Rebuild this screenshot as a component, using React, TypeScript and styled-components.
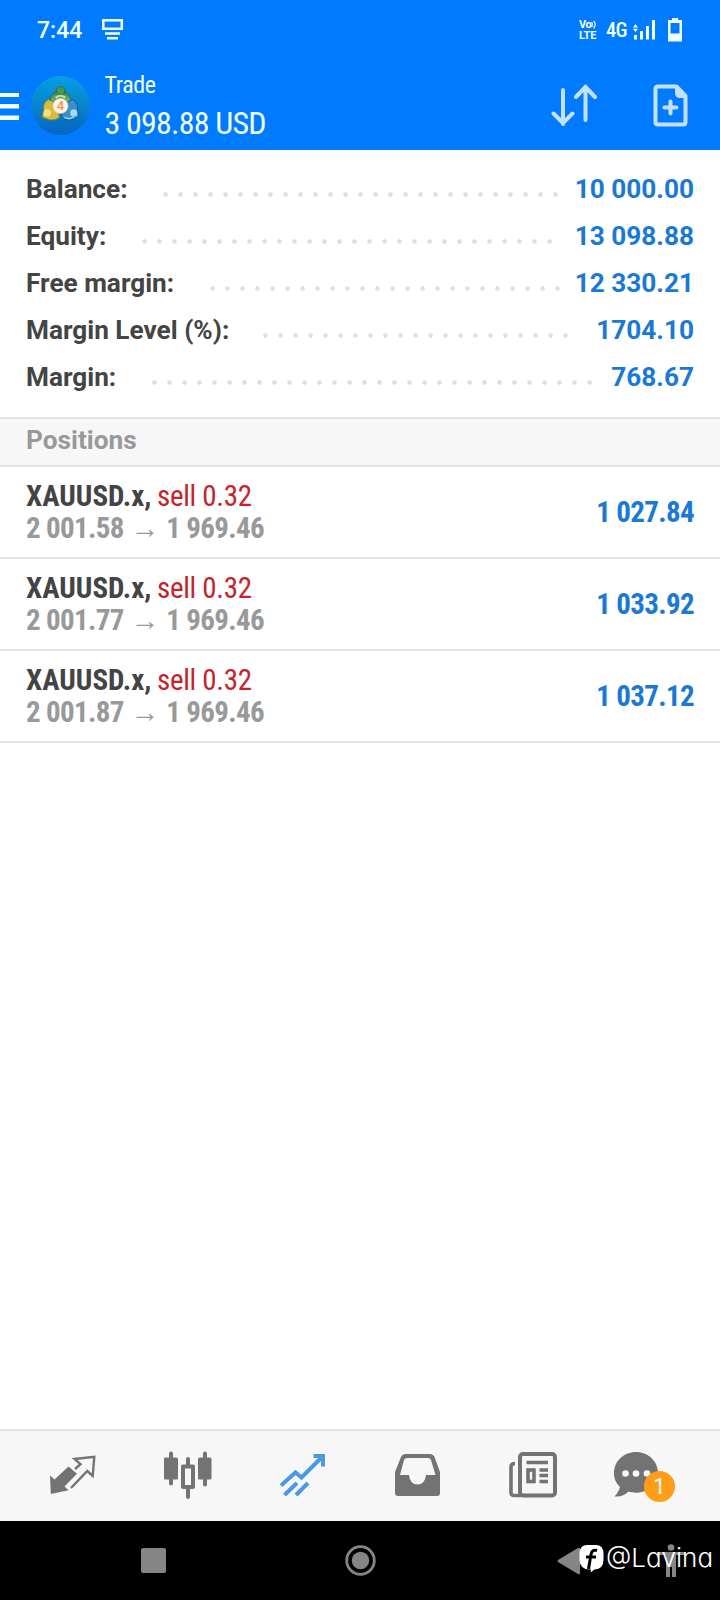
import React from "react";
import styled, { createGlobalStyle } from "styled-components";

const Global = createGlobalStyle`
  *, *::before, *::after { box-sizing: border-box; }
  body { margin: 0; background: #fff; font-family: Roboto, "Liberation Sans", sans-serif; }
  svg { display: block; flex: none; }
`;

const Screen = styled.div`
  width: 720px;
  height: 1600px;
  display: flex;
  flex-direction: column;
  background: #fff;
  overflow: hidden;
`;

const Header = styled.header`
  height: 150px;
  flex: none;
  background: #007aff;
  color: #f0ffff;
`;

const StatusBar = styled.div`
  height: 60px;
  display: flex;
  align-items: center;
  padding: 0 38px 0 37px;
`;

const Clock = styled.span`
  font-size: 23px;
  font-weight: 500;
  line-height: 30px;
  width: 65px;
  margin-top: 2px;
`;

const StatusIcons = styled.div`
  margin-left: auto;
  display: flex;
  align-items: center;
`;

const Volte = styled.div`
  display: flex;
  flex-direction: column;
  width: 20px;
  margin-right: 7px;
  font-size: 11px;
  font-weight: 700;
  line-height: 11px;
  letter-spacing: -0.5px;
`;

const VolteTop = styled.span`
  display: flex;
  height: 11px;
`;

const VolteBottom = styled.span`
  letter-spacing: -0.2px;
`;

const Network = styled.span`
  font-size: 20.5px;
  font-stretch: 80%;
  font-weight: 500;
  letter-spacing: -0.8px;
  width: 27px;
`;

const Toolbar = styled.div`
  height: 90px;
  display: flex;
  align-items: center;
`;

const Titles = styled.div`
  margin-left: 15px;
  flex: 1;
  display: flex;
  flex-direction: column;
  font-stretch: 75%;
`;

const Title = styled.span`
  font-size: 24px;
  line-height: 32px;
  margin-top: 3px;
  letter-spacing: -0.4px;
`;

const Profit = styled.span`
  font-size: 32px;
  line-height: 44px;
  letter-spacing: -0.8px;
`;

const ToolbarActions = styled.div`
  display: flex;
  align-items: center;
  gap: 56px;
  padding-right: 32px;
`;

const Summary = styled.section`
  height: 267px;
  flex: none;
  padding: 15px 26px 0;
`;

const SummaryRow = styled.div`
  height: 47px;
  display: flex;
  align-items: center;
  font-size: 26.2px;
  font-weight: 670;
  line-height: 46px;
  color: #444;
`;

const Label = styled.span<{ $width: number }>`
  width: ${(p) => p.$width}px;
  white-space: nowrap;
`;

const Leader = styled.span<{ $dots: number }>`
  width: ${(p) => p.$dots * 15}px;
  height: 5px;
  margin-top: 11px;
  background: radial-gradient(circle at 7.5px 2.5px, #e0e0e0 1.9px, transparent 2.7px) 0 0 / 15px 5px repeat-x;
`;

const Amount = styled.span`
  margin-left: auto;
  color: #1a78d6;
  white-space: nowrap;
`;

const SectionTitle = styled.h2`
  margin: 0;
  height: 50px;
  flex: none;
  border-top: 2px solid #e2e2e2;
  border-bottom: 2px solid #e2e2e2;
  background: #f7f7f7;
  padding: 0 26px;
  font-size: 26.2px;
  font-weight: 670;
  line-height: 42px;
  color: #97999b;
`;

const PositionRow = styled.div`
  height: 92px;
  flex: none;
  border-bottom: 2px solid #e2e2e2;
  padding: 0 26px;
  display: flex;
  align-items: center;
  justify-content: space-between;
  font-size: 29px;
  font-weight: 700;
  font-stretch: 75%;
  line-height: 32px;
`;

const Symbol = styled.div`
  color: #444;
  white-space: nowrap;
`;

const Side = styled.span`
  font-weight: 400;
  color: #c4242b;
  letter-spacing: -0.3px;
  margin-left: -1px;
`;

const Prices = styled.div`
  color: #97999b;
  white-space: nowrap;
`;

const Price = styled.span`
  letter-spacing: -0.65px;
`;

const Result = styled.span`
  color: #1a78d6;
  letter-spacing: -0.65px;
`;

const Spacer = styled.div`
  flex: 1;
`;

const TabBar = styled.nav`
  height: 92px;
  flex: none;
  border-top: 2px solid #e2e2e2;
  background: #f7f7f7;
  display: flex;
  padding-left: 15px;
`;

const Tab = styled.div<{ $active?: boolean; $badged?: boolean }>`
  position: relative;
  width: 115px;
  display: flex;
  align-items: center;
  justify-content: center;
  padding-bottom: 3px;
  padding-right: ${(p) => (p.$badged ? 22 : 0)}px;
  color: ${(p) => (p.$active ? "#4a98e6" : "#737373")};
`;

const Badge = styled.span`
  position: absolute;
  left: 54px;
  top: 40px;
  width: 31px;
  height: 31px;
  border-radius: 50%;
  background: #ff9d17;
  color: #fff;
  font-size: 22px;
  line-height: 32px;
  text-align: center;
`;

const SystemBar = styled.footer`
  height: 79px;
  flex: none;
  position: relative;
  background: #000;
  display: flex;
  align-items: center;
  padding-left: 141px;
`;

const RecentButton = styled.span`
  width: 25px;
  height: 25px;
  border-radius: 2px;
  background: #858585;
  margin-right: 179px;
`;

const Watermark = styled.div`
  position: absolute;
  left: 579px;
  top: 21px;
  display: flex;
  align-items: center;
  color: #fff;
  font-family: Inter, sans-serif;
  font-size: 26px;
  font-weight: 350;
  line-height: 32px;
  font-feature-settings: "cv11";
`;

const Handle = styled.span`
  margin-left: 2px;
`;

const summary = [
  { label: "Balance:", width: 132, dots: 27, value: "10 000.00" },
  { label: "Equity:", width: 111, dots: 28, value: "13 098.88" },
  { label: "Free margin:", width: 179, dots: 24, value: "12 330.21" },
  { label: "Margin Level (%):", width: 232, dots: 21, value: "1704.10" },
  { label: "Margin:", width: 121, dots: 30, value: "768.67" },
];

const positions = [
  { open: "2 001.58", profit: "1 027.84" },
  { open: "2 001.77", profit: "1 033.92" },
  { open: "2 001.87", profit: "1 037.12" },
];

const CastIcon = () => (
  <svg width="22" height="22" viewBox="0 0 22 22" fill="none" stroke="currentColor">
    <rect x="1.3" y="1.3" width="18.500" height="8.5" strokeWidth="2.5" />
    <path d="M3 14.5h15M5 19.3h11" strokeWidth="2.6" />
  </svg>
);

const VolteWaves = () => (
  <svg width="6" height="10" viewBox="0 0 6 10" fill="none" stroke="currentColor" strokeWidth="1.2">
    <path d="M.5 3.200q1.8 2.3 0 5M2.6 1.800q3.2 3.500 0 7.500" />
  </svg>
);

const SignalIcon = () => (
  <svg width="23" height="20" viewBox="0 0 23 20" fill="currentColor">
    <path d="M2.5 4L5 7.5H0zM2.5 12L5 8.8H0zM1 15h3v4.5H1zM7 11h3v8.5H7zM13 6h3v13.500h-3zM19 0h3v19.500h-3z" />
  </svg>
);

const BatteryIcon = () => (
  <svg width="14" height="24" viewBox="0 0 14 24" fill="currentColor">
    <path fillRule="evenodd" d="M4 0h6v2h4v21.500H0V2h4zM2.500 5v10.500h9V5z" />
  </svg>
);

const MenuIcon = () => (
  <svg width="19" height="28" viewBox="0 0 19 28" fill="currentColor" style={{ marginTop: 3 }}>
    <path d="M0 0h19v4H0zM0 11h19v4.500H0zM0 22.500h19V27H0z" />
  </svg>
);

const Logo = () => (
  <svg width="59" height="61" viewBox="0 0 60 62" style={{ marginLeft: 11.5 }}>
    <defs>
      <linearGradient id="disc" x1="0" y1="0" x2="0" y2="1">
        <stop offset="0" stopColor="#069fe4" />
        <stop offset="0.5" stopColor="#0784cd" />
        <stop offset="1" stopColor="#0664c4" />
      </linearGradient>
      <linearGradient id="green" x1="0" y1="0" x2="0" y2="1">
        <stop offset="0" stopColor="#347f4c" />
        <stop offset="1" stopColor="#a3cd85" />
      </linearGradient>
    </defs>
    <circle cx="30" cy="31" r="30" fill="url(#disc)" />
    <path d="M25 17c-4 2-6 6-5 12l10 3 10-3c1-6-1-10-5-12z" fill="url(#green)" stroke="#2a6c50" />
    <path d="M18 25c-5 2-6 7-5 11l-1.500 5q-.5 3 3.500 3c4 3 11 2 14-1L26 29z" fill="#d9bb43" stroke="#6d8138" />
    <path d="M42 25c5 2 6 7 5 11l1.500 5q.5 3-3.500 3c-4 3-11 2-14-1L34 29z" fill="#3b8fc6" stroke="#155a94" />
    <circle cx="30" cy="16" r="4.300" fill="#4a9550" stroke="#26683e" strokeWidth=".8" />
    <path d="M25 23q5-4 10 0" fill="none" stroke="#c4e0a4" strokeWidth="2" />
    <circle cx="16.500" cy="38.500" r="3.800" fill="#f4e080" />
    <circle cx="43.500" cy="38.500" r="3.600" fill="#a6daf5" />
    <path d="M34 43q6 3 10-1" fill="none" stroke="#9bd6f5" strokeWidth="1.500" />
    <circle cx="30" cy="31.500" r="7.600" fill="#fff6e8" stroke="#d7d5c8" strokeWidth=".7" />
    <text x="30" y="36" textAnchor="middle" fontFamily="Roboto" fontWeight="500" fontSize="13" fill="#f09050">4</text>
  </svg>
);

const SortIcon = () => (
  <svg width="46" height="42" viewBox="0 0 46 42" fill="none" stroke="#c3e1ff" strokeWidth="4" strokeLinecap="round" strokeLinejoin="round">
    <path d="M12 6v34M2.500 29.500L12 39l9.500-9.500M34.500 36V2.500M25 13l9.500-10L44 13" />
  </svg>
);

const NewOrderIcon = () => (
  <svg width="35" height="43" viewBox="0 0 35 43" fill="none" stroke="#c3e1ff" strokeWidth="4" strokeLinejoin="round" strokeLinecap="round">
    <path d="M5 2.500h18.500L32.500 12v26q0 2.500-2.500 2.500H5q-2.500 0-2.500-2.500V5q0-2.500 2.500-2.500z" />
    <path d="M22 2v7q0 5 5 5h6L23 2z" fill="#c3e1ff" stroke="none" />
    <path d="M11.500 23.500h12M17.500 17.500v12" />
  </svg>
);

const QuotesIcon = () => (
  <svg width="46" height="40" viewBox="0 0 46 40" fill="currentColor">
    <path d="M18.500 11.500l8.500 7.300L14.500 31.500l4 3.800L.8 39 0 20.500l4.500 4z" />
    <path d="M25 14l5.500-4.800L24.500 4 44.300 1.800 42.700 21l-5.400-5L21 33" fill="none" stroke="currentColor" strokeWidth="2.400" />
  </svg>
);

const ChartIcon = () => (
  <svg width="48" height="48" viewBox="0 0 48 48" fill="currentColor">
    <rect x="0" y="6.500" width="14" height="22" rx="1.500" />
    <rect x="34" y="6.500" width="13.500" height="22" rx="1.500" />
    <path d="M7 2.500v30M41 2.500v31M24 8v38" stroke="currentColor" strokeWidth="4" strokeLinecap="round" />
    <rect x="19" y="15.500" width="10" height="20.500" fill="#f7f7f7" stroke="currentColor" strokeWidth="4" strokeLinejoin="round" />
  </svg>
);

const TradeIcon = () => (
  <svg width="46" height="44" viewBox="0 0 46 44" fill="none" stroke="currentColor" strokeWidth="4">
    <path d="M1 32.500L15.500 19.500l6 5L42 4M33.500 3H43v10.500M4.500 42l12.500-12M16 42l12-12" />
  </svg>
);

const InboxIcon = () => (
  <svg width="46" height="42" viewBox="0 0 46 42" fill="currentColor">
    <path fillRule="evenodd" d="M11 0h24q3 0 4.500 3L45 18v21q0 3-3 3H3q-3 0-3-3V18L6 3Q7.500 0 11 0zM12 4q-2 0-3 2L5 21h9q1 9.500 8.500 9.500T31 21h9.500L36 6q-.8-2-3-2z" />
  </svg>
);

const NewsIcon = () => (
  <svg width="48" height="46" viewBox="0 0 48 46" fill="none" stroke="currentColor" strokeWidth="4">
    <rect x="11" y="2" width="35" height="41.500" rx="3" />
    <path d="M12 43.500H5q-3 0-3-3V15q0-3.500 4-3.500" strokeWidth="3.600" />
    <path d="M17.500 10.500H39M30.500 18h8.500M30.500 23.500h8.500M30.500 29.500h8.500" strokeWidth="3.400" />
    <rect x="19" y="18" width="6" height="11.500" strokeWidth="3.600" />
  </svg>
);

const ChatIcon = () => (
  <svg width="46" height="46" viewBox="0 0 46 46">
    <path fill="currentColor" d="M22 0C10 0 0 9 0 21c0 6 2 10 6 14-1 4-3 7-5.500 9.500 6 .5 10-1 14-5 2 .8 4.500 1.200 7.500 1.200 12.500 0 22-9 22-20S34.500 0 22 0z" />
    <g fill="#f7f7f7"><circle cx="11.500" cy="21.500" r="3.300" /><circle cx="22" cy="21.500" r="3.300" /><circle cx="33" cy="21.500" r="3.300" /></g>
  </svg>
);

const HomeIcon = () => (
  <svg width="31" height="31" viewBox="0 0 31 31" fill="none" stroke="#858585">
    <circle cx="15.500" cy="15.500" r="13.800" strokeWidth="2.800" />
    <circle cx="15.500" cy="15.500" r="8.700" fill="#858585" stroke="none" />
  </svg>
);

const BackIcon = () => (
  <svg width="23" height="28" viewBox="0 0 23 28" fill="#858585" style={{ marginLeft: 181 }}>
    <path d="M23 2v24q0 2-2 1L1 15q-1-1 0-2L21 1q2-1 2 1z" />
  </svg>
);

const PersonIcon = () => (
  <svg width="30" height="33" viewBox="0 0 30 33" fill="#858585" style={{ marginLeft: 76 }}>
    <circle cx="15" cy="3.500" r="3.300" />
    <path d="M1 8h28v3h-9v22h-4v-10h-2v10h-4V11H1z" />
  </svg>
);

const FacebookMark = () => (
  <svg width="25" height="29" viewBox="0 0 25 29">
    <path fill="#fff" d="M8 1h9q7 0 7.500 8v7q0 9-9 9.500l-4 3 .5-3Q1 26 .5 16V9Q1 1 8 1z" />
    <path d="M18 6.500q-5-1.500-6 4L9.500 25M7 13h10" fill="none" stroke="#000" strokeWidth="3" />
  </svg>
);

export default function App() {
  return (
    <Screen>
      <Global />
      <Header>
        <StatusBar>
          <Clock>7:44</Clock>
          <CastIcon />
          <StatusIcons>
            <Volte>
              <VolteTop>Vo<VolteWaves /></VolteTop>
              <VolteBottom>LTE</VolteBottom>
            </Volte>
            <Network>4G</Network>
            <SignalIcon />
            <svg width="12" height="1" />
            <BatteryIcon />
          </StatusIcons>
        </StatusBar>
        <Toolbar>
          <MenuIcon />
          <Logo />
          <Titles>
            <Title>Trade</Title>
            <Profit>3 098.88 USD</Profit>
          </Titles>
          <ToolbarActions>
            <SortIcon />
            <NewOrderIcon />
          </ToolbarActions>
        </Toolbar>
      </Header>
      <Summary>
        {summary.map((row) => (
          <SummaryRow key={row.label}>
            <Label $width={row.width}>{row.label}</Label>
            <Leader $dots={row.dots} />
            <Amount>{row.value}</Amount>
          </SummaryRow>
        ))}
      </Summary>
      <SectionTitle>Positions</SectionTitle>
      {positions.map((p) => (
        <PositionRow key={p.open}>
          <div>
            <Symbol>XAUUSD.x, <Side>sell 0.32</Side></Symbol>
            <Prices><Price>{p.open}</Price> → <Price>1 969.46</Price></Prices>
          </div>
          <Result>{p.profit}</Result>
        </PositionRow>
      ))}
      <Spacer />
      <TabBar>
        <Tab><QuotesIcon /></Tab>
        <Tab><ChartIcon /></Tab>
        <Tab $active><TradeIcon /></Tab>
        <Tab><InboxIcon /></Tab>
        <Tab><NewsIcon /></Tab>
        <Tab $badged><ChatIcon /><Badge>1</Badge></Tab>
      </TabBar>
      <SystemBar>
        <RecentButton />
        <HomeIcon />
        <BackIcon />
        <PersonIcon />
        <Watermark><FacebookMark /><Handle>@Lavina</Handle></Watermark>
      </SystemBar>
    </Screen>
  );
}
